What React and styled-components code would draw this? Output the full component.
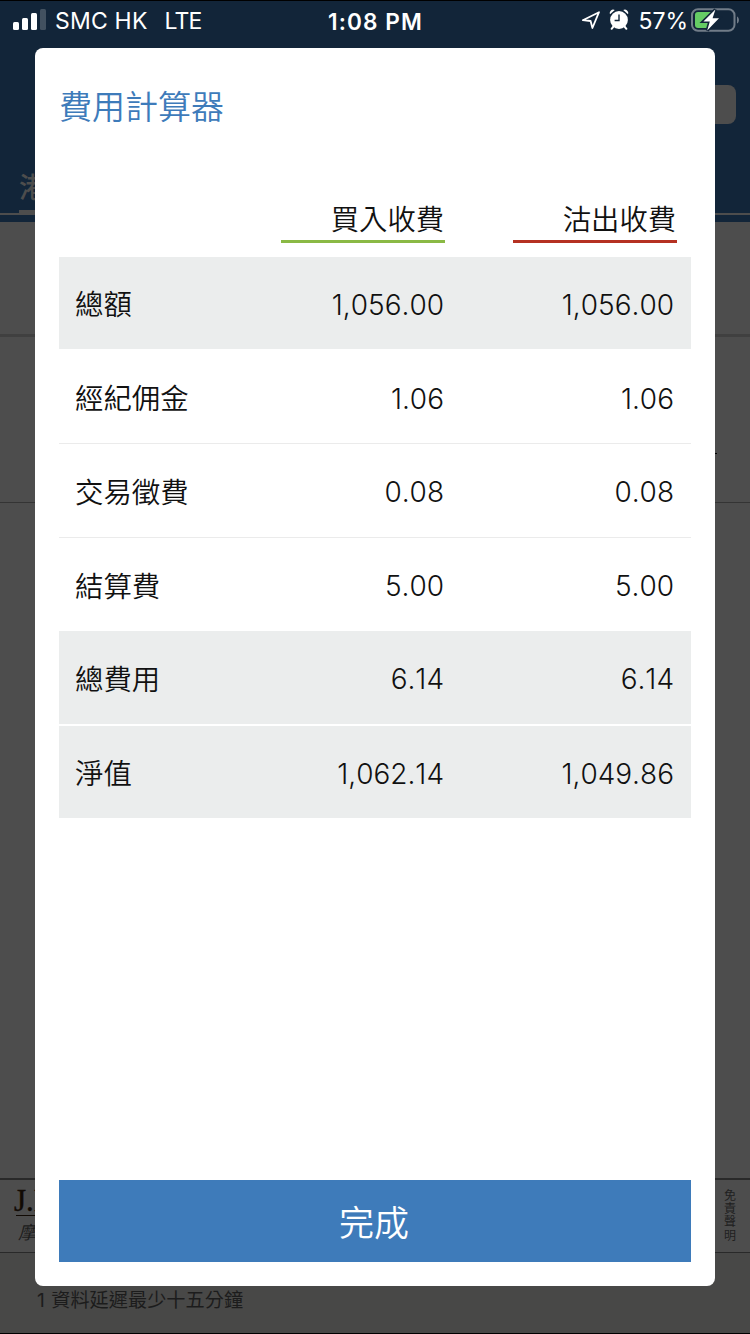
import React from "react";
import styled, { createGlobalStyle } from "styled-components";

const rows = [
  { label: "總額", buy: "1,056.00", sell: "1,056.00", height: 94, gap: 2, shaded: true },
  { label: "經紀佣金", buy: "1.06", sell: "1.06", height: 93, line: true },
  { label: "交易徵費", buy: "0.08", sell: "0.08", height: 94, line: true },
  { label: "結算費", buy: "5.00", sell: "5.00", height: 93 },
  { label: "總費用", buy: "6.14", sell: "6.14", height: 95, gap: 2, shaded: true },
  { label: "淨值", buy: "1,062.14", sell: "1,049.86", height: 92, shaded: true },
];

const SignalIcon = () => (
  <svg width="34" height="22" viewBox="0 0 34 22">
    <rect x="0" y="13" width="6" height="8" rx="1.5" fill="#fff" />
    <rect x="9" y="9" width="6" height="12" rx="1.5" fill="#fff" />
    <rect x="18" y="4" width="6" height="17" rx="1.5" fill="#fff" />
    <rect x="27" y="0" width="6" height="21" rx="1.5" fill="#425160" />
  </svg>
);

const LocationIcon = () => (
  <svg width="20" height="20" viewBox="0 0 20 20">
    <path
      d="M1.8 10.2 L18 2.2 L11.4 18 L9.6 11 Z"
      fill="none"
      stroke="#fff"
      strokeWidth="1.8"
      strokeLinejoin="round"
    />
  </svg>
);

const AlarmIcon = () => (
  <svg width="20" height="22" viewBox="0 0 20 22">
    <path d="M1 5.2 A3.4 3.4 0 0 1 5.8 1 Z M19 5.2 A3.4 3.4 0 0 0 14.2 1 Z" fill="#fff" />
    <path d="M4.5 17.5 L2.6 19.8 M15.5 17.5 L17.4 19.8" stroke="#fff" strokeWidth="2" strokeLinecap="round" />
    <circle cx="10" cy="11" r="8.9" fill="#fff" />
    <path d="M10 5.5 V11.5 H5.6" fill="none" stroke="#122539" strokeWidth="1.4" />
  </svg>
);

const BatteryIcon = () => (
  <svg width="49" height="24" viewBox="0 0 49 24">
    <rect x="1" y="1.2" width="42.5" height="21.6" rx="6" fill="none" stroke="#717c88" strokeWidth="2" />
    <path d="M46 8.5 C48.6 9.5 48.6 14.5 46 15.5 Z" fill="#717c88" />
    <path d="M7 4 H20 V20 H7 Q4 20 4 17 V7 Q4 4 7 4 Z" fill="#65cc64" />
    <path
      d="M24.4 1.6 L12.4 13.4 H18.8 L16.2 22.4 L28 10.2 H21.6 Z"
      fill="#fff"
      stroke="#122539"
      strokeWidth="3.2"
      paintOrder="stroke"
    />
  </svg>
);

const App = () => {
  return (
    <>
      <GlobalStyle />
      <Page>
        <Header>
          <StatusBar>
            <Carrier>
              <SignalIcon />
              <CarrierName>SMC HK</CarrierName>
              <Network>LTE</Network>
            </Carrier>
            <Clock>1:08 PM</Clock>
            <StatusRight>
              <LocationIcon />
              <AlarmIcon />
              <Percent>57%</Percent>
              <BatteryIcon />
            </StatusRight>
          </StatusBar>
          <SearchBox />
          <TabBar>
            <Tab>港股</Tab>
          </TabBar>
        </Header>
        <QuotePanel />
        <FormPanel>
          <FormMark />
        </FormPanel>
        <ContentPanel />
        <AdBar>
          <AdLogo>
            <AdName>J.P.</AdName>
            <AdChinese>摩根</AdChinese>
          </AdLogo>
          <Disclaimer>免責聲明</Disclaimer>
        </AdBar>
        <Footer>1 資料延遲最少十五分鐘</Footer>

        <Modal>
          <Title>費用計算器</Title>
          <TableHead>
            <HeadCell $color="#8ab945">買入收費</HeadCell>
            <HeadCell $color="#b53122">沽出收費</HeadCell>
          </TableHead>
          {rows.map((row) => (
            <Row key={row.label} $height={row.height} $gap={row.gap} $line={row.line} $shaded={row.shaded}>
              <Label>{row.label}</Label>
              <Amount>{row.buy}</Amount>
              <Amount>{row.sell}</Amount>
            </Row>
          ))}
          <DoneButton>完成</DoneButton>
        </Modal>
      </Page>
    </>
  );
};

const GlobalStyle = createGlobalStyle`
  * {
    box-sizing: border-box;
  }
  body {
    margin: 0;
    background: #4d4d4d;
    font-family: Inter, "Noto Sans CJK TC", sans-serif;
  }
  svg {
    display: block;
    flex: none;
  }
`;

const Page = styled.div`
  position: relative;
  display: flex;
  flex-direction: column;
  width: 750px;
  height: 1334px;
  overflow: hidden;
  border-top: 1px solid #000;
  border-bottom: 1px solid #000;
  background: #4d4d4d;
`;

const Header = styled.div`
  display: flex;
  flex-direction: column;
  height: 221px;
  padding-bottom: 7px;
  background: #122539;
`;

const StatusBar = styled.div`
  display: grid;
  grid-template-columns: 1fr auto 1fr;
  align-items: center;
  height: 38px;
  padding: 0 10px 0 13px;
  color: #fff;
  font-size: 23px;
`;

const Carrier = styled.div`
  display: flex;
  align-items: center;
  letter-spacing: 0.2px;
  line-height: 26px;
`;

const CarrierName = styled.span`
  margin: 2px 17px 0 8px;
`;

const Network = styled.span`
  margin-top: 2px;
  letter-spacing: -0.8px;
`;

const Clock = styled.div`
  padding-top: 2px;
  margin-left: -2px;
  font-weight: 600;
  font-size: 22.6px;
  letter-spacing: 1.1px;
`;

const StatusRight = styled.div`
  display: flex;
  align-items: center;
  justify-content: flex-end;

  svg:first-child {
    margin-right: 8px;
  }
`;

const Percent = styled.span`
  margin: 2px 3px 0 9px;
`;

const SearchBox = styled.div`
  align-self: flex-end;
  width: 400px;
  height: 39px;
  margin: 46px 14px 0 0;
  border-radius: 8px;
  background: #4d4d4d;
`;

const TabBar = styled.div`
  flex: 1;
  display: flex;
  align-items: flex-end;
  padding-left: 19px;
  border-bottom: 2px solid #4d4d4d;
`;

const Tab = styled.div`
  height: 43px;
  border-bottom: 3px solid #4d4d4d;
  color: #4d4d4d;
  font-size: 28px;
  font-weight: 500;
  line-height: 36px;
`;

const QuotePanel = styled.div`
  height: 115px;
  border-bottom: 3px solid #404040;
`;

const FormPanel = styled.div`
  height: 166px;
  padding-top: 116px;
  border-bottom: 1px solid #343434;
`;

const FormMark = styled.div`
  width: 17px;
  height: 1px;
  margin-left: 700px;
  background: #000;
`;

const ContentPanel = styled.div`
  height: 675px;
`;

const AdBar = styled.div`
  display: flex;
  justify-content: space-between;
  height: 75px;
  padding: 0 13px 0 16px;
  border-top: 2px solid #292929;
  border-bottom: 1px solid #292929;
`;

const AdLogo = styled.div`
  padding-top: 6px;
  color: #110a04;
`;

const AdName = styled.div`
  width: 90px;
  height: 30px;
  border-bottom: 1px solid #110a04;
  font-family: "Liberation Serif", serif;
  font-size: 31px;
  line-height: 29px;
  text-indent: -2px;
  -webkit-text-stroke: 0.4px #110a04;
`;

const AdChinese = styled.div`
  padding-left: 2px;
  color: #1c1c1c;
  font-family: "Noto Sans CJK TC", sans-serif;
  font-size: 18px;
  font-style: italic;
  line-height: 30px;
`;

const Disclaimer = styled.div`
  width: 13px;
  padding-top: 9px;
  color: #202020;
  font-size: 12px;
  line-height: 13.2px;
`;

const Footer = styled.div`
  flex: 1;
  padding: 33px 0 0 37px;
  background: #484847;
  color: #1c1c1c;
  font-size: 19.2px;
  line-height: 28px;
  word-spacing: 1px;
`;

const Modal = styled.div`
  position: absolute;
  top: 47px;
  left: 35px;
  display: flex;
  flex-direction: column;
  width: 680px;
  height: 1238px;
  padding: 0 24px 24px;
  border-radius: 8px;
  background: #fff;
  color: #111;
  font-size: 28px;
  font-weight: 300;
`;

const Title = styled.div`
  height: 146px;
  padding-top: 35px;
  color: #3e7bba;
  font-size: 33px;
  font-weight: 350;
  line-height: 48px;
`;

const TableHead = styled.div`
  display: flex;
  justify-content: flex-end;
  gap: 68px;
  height: 63px;
  padding-right: 14px;
`;

const HeadCell = styled.div`
  width: 164px;
  height: 49px;
  padding: 2px 1px 0 0;
  border-bottom: 3px solid ${(props) => props.$color};
  font-size: 28.3px;
  font-weight: 350;
  line-height: 48px;
  text-align: right;
`;

const Row = styled.div`
  display: grid;
  grid-template-columns: 1fr 230px 230px;
  align-items: center;
  height: ${(props) => props.$height}px;
  padding: 2px 17px 0 16px;
  border-bottom: ${(props) => (props.$line ? "1px solid #ebebeb" : `${props.$gap || 0}px solid #fff`)};
  background: ${(props) => (props.$shaded ? "#ebeded" : "#fff")};
`;

const Label = styled.div`
  padding-bottom: 3px;
  font-size: 28.4px;
  font-weight: 350;
`;

const Amount = styled.div`
  padding-top: 1px;
  font-kerning: none;
  text-align: right;
`;

const DoneButton = styled.button`
  height: 82px;
  margin-top: auto;
  padding: 0 2px 2px 0;
  border: none;
  background: #3e7bba;
  color: #fff;
  font-family: inherit;
  font-size: 35px;
  font-weight: 350;
`;

export default App;
